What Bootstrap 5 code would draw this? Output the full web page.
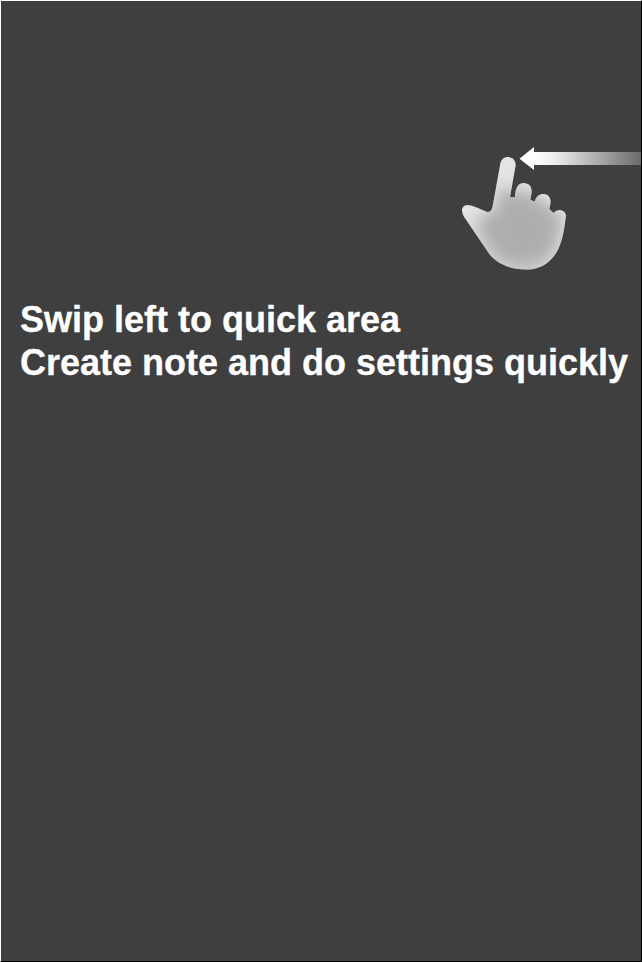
<!DOCTYPE html>
<html lang="en">
<head>
<meta charset="utf-8">
<meta name="viewport" content="width=device-width, initial-scale=1">
<title>Quick area</title>
<link href="https://cdn.jsdelivr.net/npm/bootstrap@5.3.0/dist/css/bootstrap.min.css" rel="stylesheet">
<style>
body { background: #3f3f3f; font-family: "Liberation Sans", Arial, sans-serif; }
.guide { height: 962px; border: 1px solid #000; border-left-color: #fff; border-top-color: #fff; background: #3f3f3f; }
.gesture { width: 181px; height: 130px; margin-top: 144px; }
.hint { font-size: 36px; line-height: 43px; margin-top: 23px; padding-left: 19px; -webkit-text-stroke: .3px #fff; }
</style>
</head>
<body>
<main class="guide d-flex flex-column overflow-hidden">
  <svg class="gesture align-self-end flex-shrink-0" viewBox="460 145 181 130" aria-hidden="true">
    <defs>
      <linearGradient id="trail" gradientUnits="userSpaceOnUse" x1="533" y1="0" x2="645" y2="0">
        <stop offset="0" stop-color="#fff"/><stop offset=".2" stop-color="#ececec"/><stop offset="1" stop-color="#646464"/>
      </linearGradient>
      <linearGradient id="skin" gradientUnits="userSpaceOnUse" x1="0" y1="157" x2="0" y2="270">
        <stop offset="0" stop-color="#e4e4e4"/><stop offset=".5" stop-color="#e4e4e4"/><stop offset="1" stop-color="#d6d6d6"/>
      </linearGradient>
      <filter id="glow" x="-30%" y="-30%" width="160%" height="160%"><feGaussianBlur stdDeviation="7.5"/></filter>
      <path id="hand" d="M500.3 163.5C501.2 159.4 504 157 507.7 157C512.8 157 516.2 160.8 515.6 166L510 197H515C515.3 188 518 183 523.5 183C530 183 532.6 188 531.4 194L530.3 200L534.8 201.5C536 196.5 539 194 543.5 194C549 194 551.5 199 550.3 204.5L549.3 209L553.5 213C556 210.4 558.5 209.8 561 210.2C565 211 566.6 214 565.7 218C564 231 562.4 242 556.8 252C549 265 538 270 525 269.6C511 269 499 265 490 255L465.5 219C461.5 213.5 460.8 208.5 464 206C467 204 471 205.3 475 206.8L486 211.4C489.5 213 491.8 211 492.5 207Z"/>
      <clipPath id="handClip"><use href="#hand"/></clipPath>
    </defs>
    <use href="#hand" fill="url(#skin)"/>
    <g clip-path="url(#handClip)"><path filter="url(#glow)" fill="#aeaeae" d="M501 184L511 192L524 190L544 202L562 216C560 248 548 266 524 267C502 266 490 254 484 241L474 220L495 211Z"/></g>
    <path fill="url(#trail)" d="M519.5 158.7L534 147V152H641V165H534V170Z"/>
  </svg>
  <h1 class="hint text-white fw-bold text-nowrap mb-0">Swip left to quick area<br>Create note and do settings quickly</h1>
</main>
<script src="https://cdn.jsdelivr.net/npm/bootstrap@5.3.0/dist/js/bootstrap.bundle.min.js"></script>
</body>
</html>
